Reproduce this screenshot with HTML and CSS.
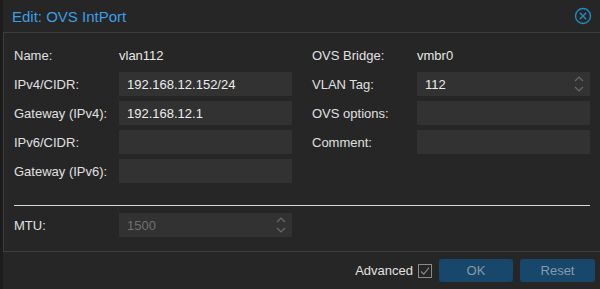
FILE: index.html
```html
<!DOCTYPE html>
<html>
<head>
<meta charset="utf-8">
<link rel="stylesheet" href="styles.css">
</head>
<body>
<div class="window">
  <div class="edge"></div>
  <div class="dialog">
    <div class="header">
      <span class="title">Edit: OVS IntPort</span>
      <svg class="close" width="18" height="18" viewBox="0 0 18 18">
        <circle cx="9" cy="9" r="7.5" fill="none" stroke="#1e8cc3" stroke-width="1.4"/>
        <path d="M5.8 5.8 L12.2 12.2 M12.2 5.8 L5.8 12.2" stroke="#1e8cc3" stroke-width="1.4" fill="none"/>
      </svg>
    </div>
    <div class="panel">
      <div class="columns">
        <div class="col">
          <div class="row"><span class="label">Name:</span><span class="value">vlan112</span></div>
          <div class="row"><span class="label">IPv4/CIDR:</span><div class="input">192.168.12.152/24</div></div>
          <div class="row"><span class="label">Gateway (IPv4):</span><div class="input">192.168.12.1</div></div>
          <div class="row"><span class="label">IPv6/CIDR:</span><div class="input"></div></div>
          <div class="row"><span class="label">Gateway (IPv6):</span><div class="input"></div></div>
        </div>
        <div class="col">
          <div class="row"><span class="label">OVS Bridge:</span><span class="value">vmbr0</span></div>
          <div class="row"><span class="label">VLAN Tag:</span><div class="input spin">112<svg class="arrows" width="10" height="16" viewBox="0 0 10 16"><path d="M1 5 L5 1 L9 5 M1 11 L5 15 L9 11" fill="none" stroke="#6a6a6a" stroke-width="1.2"/></svg></div></div>
          <div class="row"><span class="label">OVS options:</span><div class="input"></div></div>
          <div class="row"><span class="label">Comment:</span><div class="input"></div></div>
        </div>
      </div>
      <div class="sep"></div>
      <div class="col mtu">
        <div class="row"><span class="label">MTU:</span><div class="input spin disabled">1500<svg class="arrows" width="10" height="16" viewBox="0 0 10 16"><path d="M1 5 L5 1 L9 5 M1 11 L5 15 L9 11" fill="none" stroke="#6a6a6a" stroke-width="1.2"/></svg></div></div>
      </div>
    </div>
    <div class="footer">
      <span class="adv">Advanced</span>
      <svg class="check" width="14" height="14" viewBox="0 0 14 14">
        <rect x="0.5" y="0.5" width="13" height="13" fill="none" stroke="#8a8a8a"/>
        <path d="M3 7.5 L5.8 10.2 L11 3.6" fill="none" stroke="#8a8a8a" stroke-width="1.1"/>
      </svg>
      <button class="btn ok">OK</button>
      <button class="btn reset">Reset</button>
    </div>
  </div>
</div>
</body>
</html>
```

FILE: styles.css
```css
html, body {
  margin: 0;
  padding: 0;
  background: #262626;
  width: 600px;
  height: 289px;
  overflow: hidden;
  font-family: "Liberation Sans", Arial, sans-serif;
  font-size: 13px;
  color: #e0e0e0;
}
.window {
  display: flex;
  height: 289px;
}
.edge {
  width: 3px;
  background: #1c1c1c;
  flex: none;
}
.dialog {
  flex: 1;
  display: flex;
  flex-direction: column;
}
.header {
  height: 32px;
  display: flex;
  align-items: center;
  justify-content: space-between;
  padding: 0 8px 0 9px;
  border-bottom: 1px solid #3d3d3d;
}
.title {
  color: #3b9fe2;
  font-size: 15px;
}
.close {
  display: block;
}
.panel {
  height: 219px;
  border-left: 1px solid #3d3d3d;
  border-bottom: 1px solid #3d3d3d;
  padding: 10px 10px 0 10px;
  box-sizing: border-box;
}
.columns {
  display: flex;
  gap: 20px;
}
.col {
  width: 278px;
  display: flex;
  flex-direction: column;
  gap: 5px;
}
.row {
  display: flex;
  align-items: center;
  height: 24px;
}
.label {
  width: 105px;
  flex: none;
}
.value {
  color: #e8e8e8;
}
.input {
  width: 173px;
  height: 24px;
  box-sizing: border-box;
  background: #323232;
  padding-left: 8px;
  display: flex;
  align-items: center;
  color: #ececec;
  position: relative;
}
.spin .arrows {
  position: absolute;
  right: 6px;
  top: 4px;
}
.disabled {
  color: #707070;
}
.sep {
  height: 1px;
  background: #d8d8d8;
  margin: 22px 0 7px 0;
}
.footer {
  flex: 1;
  display: flex;
  align-items: center;
  justify-content: flex-end;
  padding-right: 5px;
}
.adv {
  margin-right: 5px;
}
.check {
  display: block;
  margin-right: 7px;
}
.btn {
  font-family: "Liberation Sans", Arial, sans-serif;
  font-size: 13px;
  color: #8899a8;
  background: #17486c;
  border: none;
  border-radius: 3px;
  height: 23px;
  width: 74px;
  padding: 0;
}
.ok {
  margin-right: 7px;
}
.reset {
  width: 75px;
}
```
